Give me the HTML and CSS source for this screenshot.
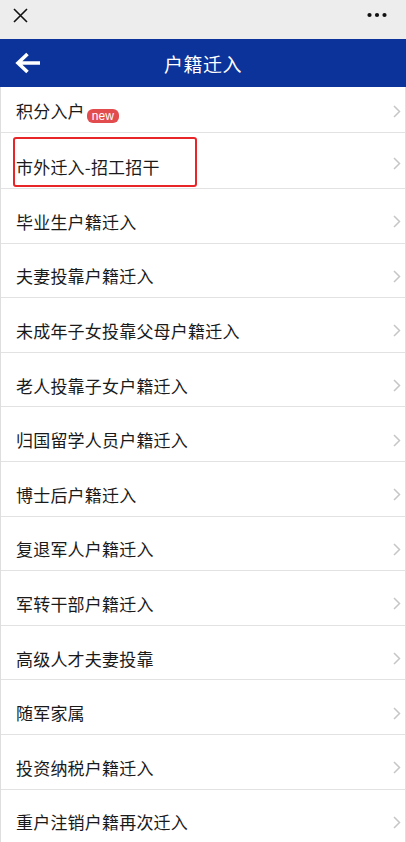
FILE: index.html
```html
<!doctype html>
<html lang="zh-CN">
<head>
    <meta charset="UTF-8">
    <meta name="viewport" content="width=device-width, initial-scale=1.0">
    <title>户籍迁入</title>
    <link rel="stylesheet" href="styles.css">
</head>
<body>
<div class="page">
    <!-- WeChat top bar -->
    <div class="topbar">
        <svg class="close-icon" width="15" height="15" viewBox="0 0 15 15">
            <path d="M1 1 L14 14 M14 1 L1 14" stroke="#111" stroke-width="1.6" fill="none"/>
        </svg>
        <svg class="more-icon" width="20" height="6" viewBox="0 0 20 6">
            <circle cx="2.5" cy="3" r="2.1" fill="#111"/>
            <circle cx="10" cy="3" r="2.1" fill="#111"/>
            <circle cx="17.5" cy="3" r="2.1" fill="#111"/>
        </svg>
    </div>

    <!-- Blue header -->
    <div class="header">
        <svg class="back-icon" width="26" height="22" viewBox="0 0 26 22">
            <path d="M3 11 H25 M12.5 2 L3 11 L12.5 20" stroke="#fff" stroke-width="3.6" fill="none" stroke-linejoin="miter"/>
        </svg>
        <h1 class="title">户籍迁入</h1>
    </div>

    <ul class="menu">
        <li class="item item-first">
            <span class="label">积分入户<span class="badge">new</span></span>
            <svg class="chevron" width="8" height="13" viewBox="0 0 8 13"><path d="M1 1 L6.5 6.5 L1 12" stroke="#c6c6c6" stroke-width="1.5" fill="none"/></svg>
        </li>
        <li class="item item-marked">
            <span class="mark">市外迁入-招工招干</span>
            <svg class="chevron" width="8" height="13" viewBox="0 0 8 13"><path d="M1 1 L6.5 6.5 L1 12" stroke="#c6c6c6" stroke-width="1.5" fill="none"/></svg>
        </li>
        <li class="item"><span class="label">毕业生户籍迁入</span><svg class="chevron" width="8" height="13" viewBox="0 0 8 13"><path d="M1 1 L6.5 6.5 L1 12" stroke="#c6c6c6" stroke-width="1.5" fill="none"/></svg></li>
        <li class="item"><span class="label">夫妻投靠户籍迁入</span><svg class="chevron" width="8" height="13" viewBox="0 0 8 13"><path d="M1 1 L6.5 6.5 L1 12" stroke="#c6c6c6" stroke-width="1.5" fill="none"/></svg></li>
        <li class="item"><span class="label">未成年子女投靠父母户籍迁入</span><svg class="chevron" width="8" height="13" viewBox="0 0 8 13"><path d="M1 1 L6.5 6.5 L1 12" stroke="#c6c6c6" stroke-width="1.5" fill="none"/></svg></li>
        <li class="item"><span class="label">老人投靠子女户籍迁入</span><svg class="chevron" width="8" height="13" viewBox="0 0 8 13"><path d="M1 1 L6.5 6.5 L1 12" stroke="#c6c6c6" stroke-width="1.5" fill="none"/></svg></li>
        <li class="item"><span class="label">归国留学人员户籍迁入</span><svg class="chevron" width="8" height="13" viewBox="0 0 8 13"><path d="M1 1 L6.5 6.5 L1 12" stroke="#c6c6c6" stroke-width="1.5" fill="none"/></svg></li>
        <li class="item"><span class="label">博士后户籍迁入</span><svg class="chevron" width="8" height="13" viewBox="0 0 8 13"><path d="M1 1 L6.5 6.5 L1 12" stroke="#c6c6c6" stroke-width="1.5" fill="none"/></svg></li>
        <li class="item"><span class="label">复退军人户籍迁入</span><svg class="chevron" width="8" height="13" viewBox="0 0 8 13"><path d="M1 1 L6.5 6.5 L1 12" stroke="#c6c6c6" stroke-width="1.5" fill="none"/></svg></li>
        <li class="item"><span class="label">军转干部户籍迁入</span><svg class="chevron" width="8" height="13" viewBox="0 0 8 13"><path d="M1 1 L6.5 6.5 L1 12" stroke="#c6c6c6" stroke-width="1.5" fill="none"/></svg></li>
        <li class="item"><span class="label">高级人才夫妻投靠</span><svg class="chevron" width="8" height="13" viewBox="0 0 8 13"><path d="M1 1 L6.5 6.5 L1 12" stroke="#c6c6c6" stroke-width="1.5" fill="none"/></svg></li>
        <li class="item"><span class="label">随军家属</span><svg class="chevron" width="8" height="13" viewBox="0 0 8 13"><path d="M1 1 L6.5 6.5 L1 12" stroke="#c6c6c6" stroke-width="1.5" fill="none"/></svg></li>
        <li class="item"><span class="label">投资纳税户籍迁入</span><svg class="chevron" width="8" height="13" viewBox="0 0 8 13"><path d="M1 1 L6.5 6.5 L1 12" stroke="#c6c6c6" stroke-width="1.5" fill="none"/></svg></li>
        <li class="item"><span class="label">重户注销户籍再次迁入</span><svg class="chevron" width="8" height="13" viewBox="0 0 8 13"><path d="M1 1 L6.5 6.5 L1 12" stroke="#c6c6c6" stroke-width="1.5" fill="none"/></svg></li>
    </ul>
</div>
</body>
</html>
```

FILE: styles.css
```css
body {
    margin: 0;
    background: #fff;
    font-family: "Noto Sans CJK SC", "Noto Sans", sans-serif;
    color: #1a1a1a;
}

.page {
    width: 406px;
    overflow: hidden;
}

/* WeChat top bar */
.topbar {
    height: 39px;
    background: #ededed;
    display: flex;
    align-items: center;
    justify-content: space-between;
    padding: 0 19px 0 13px;
    box-sizing: border-box;
}

.close-icon {
    margin-top: -9px;
}

.more-icon {
    margin-top: -9px;
}

/* Blue header */
.header {
    height: 48px;
    background: #0c3399;
    display: flex;
    align-items: center;
    position: relative;
    padding-left: 15px;
}

.title {
    margin: 0;
    position: absolute;
    left: 0;
    right: 0;
    text-align: center;
    font-size: 19px;
    font-weight: normal;
    color: #fff;
    letter-spacing: 0.5px;
}

/* Menu list */
.menu {
    list-style: none;
    margin: 0;
    padding: 0;
    border-left: 1px solid #dedede;
    border-right: 1px solid #dedede;
}

.item {
    height: 54.6px;
    box-sizing: border-box;
    border-bottom: 1px solid #e2e2e2;
    display: flex;
    align-items: center;
    justify-content: space-between;
    padding: 12px 4px 0 15px;
    font-size: 17px;
    letter-spacing: 0.2px;
}

.item-first {
    height: 46px;
    padding-top: 3px;
}

.item-marked {
    height: 56px;
    padding-left: 12px;
    padding-top: 5px;
}

.label {
    display: flex;
    align-items: flex-end;
    line-height: 20px;
}

.badge {
    display: inline-block;
    margin-left: 2px;
    margin-bottom: -2px;
    height: 14px;
    padding: 0 5px;
    border-radius: 6px;
    background: #e34c4f;
    color: #fff;
    font-family: "Liberation Sans", sans-serif;
    font-size: 12px;
    line-height: 14px;
    letter-spacing: 0;
}

/* red annotation box */
.mark {
    display: flex;
    align-items: center;
    width: 184px;
    height: 50px;
    box-sizing: border-box;
    border: 2px solid #e8262a;
    border-radius: 3px;
    padding: 8px 0 0 1px;
    margin-top: -2px;
}

.chevron {
    flex-shrink: 0;
}
```
